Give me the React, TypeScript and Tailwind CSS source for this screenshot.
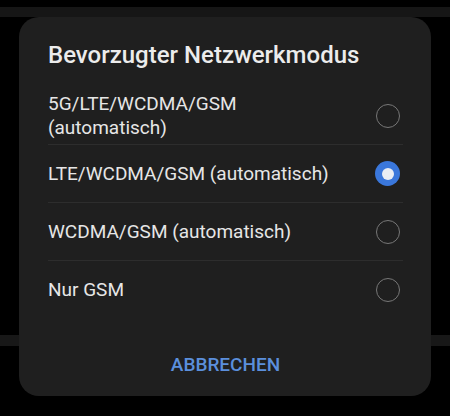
import React from 'react';

const options = [
  { label: '5G/LTE/WCDMA/GSM (automatisch)', lines: ['5G/LTE/WCDMA/GSM', '(automatisch)'], checked: false },
  { label: 'LTE/WCDMA/GSM (automatisch)', checked: true },
  { label: 'WCDMA/GSM (automatisch)', checked: false },
  { label: 'Nur GSM', checked: false },
];

function Radio({ checked }: { checked: boolean }) {
  if (checked) {
    return (
      <span className="flex h-[25px] w-[25px] items-center justify-center rounded-full bg-[#3a77db]">
        <span className="h-[12px] w-[12px] rounded-full bg-[#e9edf3]" />
      </span>
    );
  }
  return <span className="block h-[24px] w-[24px] rounded-full border-[1.5px] border-[#777777]" />;
}

export default function App() {
  return (
    <div
      className="relative h-[416px] w-[450px] overflow-hidden bg-black"
      style={{ fontFamily: 'Roboto, "Noto Sans", sans-serif' }}
    >
      {/* screen behind the dialog */}
      <div className="absolute left-0 right-0 top-[7px] h-[10px] bg-[#161616]" />
      <div className="absolute left-0 right-0 top-[335px] h-[11px] bg-[#181818]" />

      <div className="relative mx-[19px] mt-[17px] h-[379px] rounded-[20px] bg-[#1f1f1f] px-[29px] pr-[28px]">
        <h2 className="pt-[22px] text-[24px] font-medium leading-[32px] text-[#ececec]">
          Bevorzugter Netzwerkmodus
        </h2>

        <div className="mt-[16px]">
          {options.map((o, i) => (
            <div
              key={o.label}
              className={
                'flex min-h-[58px] items-center justify-between ' +
                (i < options.length - 1 ? 'border-b border-[#2d2d2d]' : '')
              }
            >
              <span className="text-[19px] leading-[24px] text-[#e6e6e6]">
                {o.lines ? (
                  <>
                    {o.lines[0]}
                    <br />
                    {o.lines[1]}
                  </>
                ) : (
                  o.label
                )}
              </span>
              <span className="mr-[3px]">
                <Radio checked={o.checked} />
              </span>
            </div>
          ))}
        </div>

        <div className="mt-[34px] flex justify-center">
          <button className="text-[19px] font-medium leading-[24px] text-[#5b8fdc]">
            ABBRECHEN
          </button>
        </div>
      </div>
    </div>
  );
}
